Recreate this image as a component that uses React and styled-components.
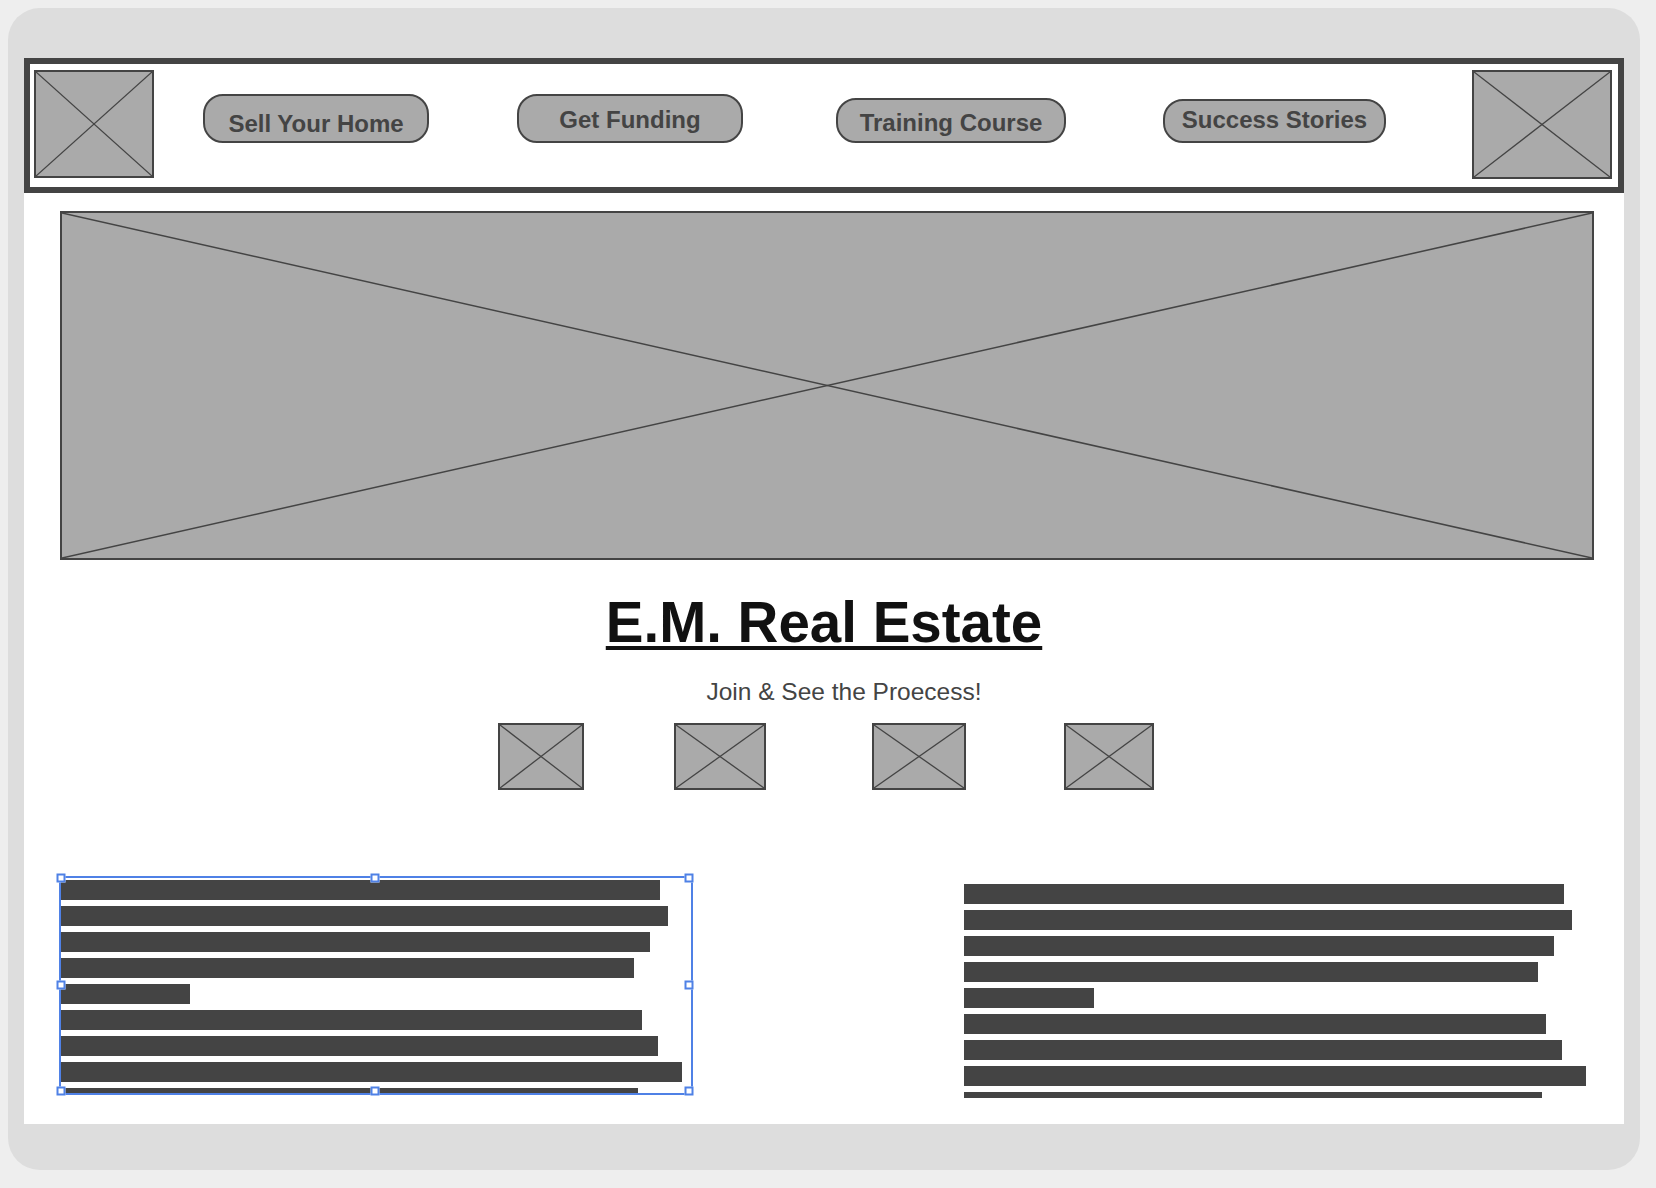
import React from "react";
import styled, { createGlobalStyle } from "styled-components";

const GlobalStyle = createGlobalStyle`
  html, body {
    margin: 0;
    padding: 0;
    background: #eeeeee;
    font-family: "Liberation Sans", Arial, sans-serif;
  }
  * { box-sizing: border-box; }
`;

const Page = styled.div`
  width: 1656px;
  min-height: 1188px;
  padding: 8px 0 0 8px;
`;

const Device = styled.div`
  width: 1632px;
  height: 1162px;
  background: #dddddd;
  border-radius: 32px;
  padding: 50px 16px 46px 16px;
`;

const Screen = styled.div`
  width: 1600px;
  height: 1066px;
  background: #ffffff;
  display: flex;
  flex-direction: column;
  overflow: hidden;
`;

const Header = styled.header`
  height: 135px;
  border: 6px solid #444444;
  display: flex;
  align-items: flex-start;
`;

const PlaceholderBox = styled.div`
  position: relative;
  flex: none;
  width: ${(p) => p.$w}px;
  height: ${(p) => p.$h}px;
  margin-left: ${(p) => p.$ml || 0}px;
  margin-top: ${(p) => p.$mt || 0}px;
  background: #aaaaaa;
  border: 2px solid #444444;
  svg {
    display: block;
    width: 100%;
    height: 100%;
  }
`;

const Placeholder = ({ w, h, ml, mt, stroke = 1.3 }) => (
  <PlaceholderBox $w={w} $h={h} $ml={ml} $mt={mt}>
    <svg viewBox="0 0 100 100" preserveAspectRatio="none">
      <line x1="0" y1="0" x2="100" y2="100" stroke="#444" strokeWidth={stroke} vectorEffect="non-scaling-stroke" />
      <line x1="100" y1="0" x2="0" y2="100" stroke="#444" strokeWidth={stroke} vectorEffect="non-scaling-stroke" />
    </svg>
  </PlaceholderBox>
);

const NavButton = styled.button`
  flex: none;
  width: ${(p) => p.$w}px;
  height: ${(p) => p.$h}px;
  margin-left: ${(p) => p.$ml}px;
  margin-top: ${(p) => p.$mt}px;
  padding: ${(p) => p.$pt || 0}px 0 ${(p) => p.$pb || 0}px 0;
  display: flex;
  align-items: center;
  justify-content: center;
  background: #aaaaaa;
  border: 2px solid #444444;
  border-radius: 20px;
  color: #444444;
  font-family: "Liberation Sans", Arial, sans-serif;
  font-weight: 700;
  font-size: 24px;
  line-height: 24px;
  white-space: nowrap;
  cursor: pointer;
`;

const Hero = styled.div`
  margin: 18px 0 0 36px;
`;

const Title = styled.h1`
  margin: 31px 0 0 0;
  text-align: center;
  font-family: "Liberation Sans", Arial, sans-serif;
  font-weight: 700;
  font-size: 56.5px;
  line-height: 64px;
  color: #111111;
  text-decoration: underline;
  text-decoration-thickness: 4px;
  text-underline-offset: 4px;
`;

const Subtitle = styled.p`
  margin: 23px 0 0 0;
  padding-left: 40px;
  text-align: center;
  font-size: 24.5px;
  line-height: 28px;
  color: #444444;
`;

const ThumbRow = styled.div`
  display: flex;
  margin-top: 17px;
  padding-left: 474px;
`;

const TextRow = styled.div`
  display: flex;
  align-items: flex-start;
  margin-top: 90px;
  padding-left: 37px;
`;

const TextBlock = styled.div`
  position: relative;
  flex: none;
  width: 630px;
  margin-left: ${(p) => p.$ml || 0}px;
  margin-top: ${(p) => p.$mt || 0}px;
`;

const Lines = styled.div`
  height: 214px;
  overflow: hidden;
  display: flex;
  flex-direction: column;
  gap: 6px;
`;

const Bar = styled.div`
  flex: none;
  height: 20px;
  background: #444444;
`;

const Selection = styled.div`
  position: absolute;
  top: -4px;
  left: -2px;
  right: -2px;
  bottom: -1px;
  border: 2px solid #4f81e6;
  pointer-events: none;
`;

const Handle = styled.span`
  position: absolute;
  left: calc(${(p) => p.$x}% - ${(p) => p.$x / 100 * 2}px);
  top: calc(${(p) => p.$y}% - ${(p) => p.$y / 100 * 2}px);
  width: 9px;
  height: 9px;
  transform: translate(-50%, -50%);
  background: #ffffff;
  border: 2px solid #4f81e6;
`;

const barWidths = [599, 607, 589, 573, 129, 581, 597, 621, 577];
const handles = [
  [0, 0], [50, 0], [100, 0],
  [0, 50], [100, 50],
  [0, 100], [50, 100], [100, 100],
];

const Paragraph = ({ widths }) => (
  <Lines>
    {widths.map((w, i) => (
      <Bar key={i} style={{ width: w }} />
    ))}
  </Lines>
);

export default function App() {
  return (
    <>
      <GlobalStyle />
      <Page>
        <Device>
          <Screen>
            <Header>
              <Placeholder w={120} h={108} ml={4} mt={6} />
              <NavButton $w={226} $h={49} $ml={49} $mt={30} $pt={11}>Sell Your Home</NavButton>
              <NavButton $w={226} $h={49} $ml={88} $mt={30} $pt={3}>Get Funding</NavButton>
              <NavButton $w={230} $h={45} $ml={93} $mt={34} $pt={4}>Training Course</NavButton>
              <NavButton $w={223} $h={44} $ml={97} $mt={35} $pb={3}>Success Stories</NavButton>
              <Placeholder w={140} h={109} ml={86} mt={6} />
            </Header>
            <Hero>
              <Placeholder w={1534} h={349} stroke={1.5} />
            </Hero>
            <Title>E.M. Real Estate</Title>
            <Subtitle>Join &amp; See the Proecess!</Subtitle>
            <ThumbRow>
              <Placeholder w={86} h={67} />
              <Placeholder w={92} h={67} ml={90} />
              <Placeholder w={94} h={67} ml={106} />
              <Placeholder w={90} h={67} ml={98} />
            </ThumbRow>
            <TextRow>
              <TextBlock>
                <Paragraph widths={barWidths} />
                <Selection>
                  {handles.map(([x, y], i) => (
                    <Handle key={i} $x={x} $y={y} />
                  ))}
                </Selection>
              </TextBlock>
              <TextBlock $ml={273} $mt={4}>
                <Paragraph widths={barWidths.map((w) => w + 1)} />
              </TextBlock>
            </TextRow>
          </Screen>
        </Device>
      </Page>
    </>
  );
}
